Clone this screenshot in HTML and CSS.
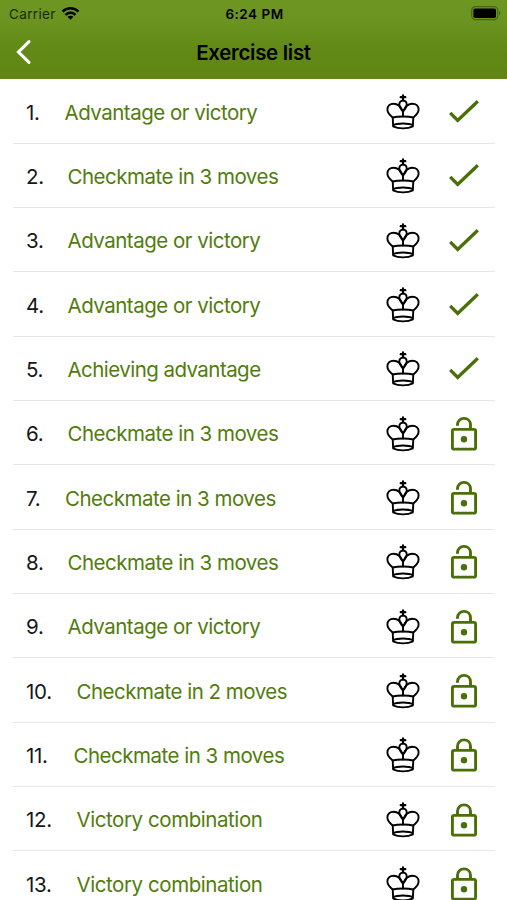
FILE: index.html
```html
<!DOCTYPE html>
<html lang="en">
<head>
<meta charset="utf-8">
<title>Exercise list</title>
<link rel="stylesheet" href="styles.css">
</head>
<body>
<svg class="sprite" aria-hidden="true">
  <symbol id="king" viewBox="0 0 36 38">
    <g fill="none" stroke="currentColor" stroke-width="1.9" stroke-linejoin="round" stroke-linecap="round">
      <path d="M18 2.400V7.500M15.700 4.200h4.600" stroke-width="2.2"/>
      <path d="M18 23.600V18.500C16.300 16.600 14.300 14.200 14.300 11.500C14.300 9.300 15.800 7.600 18 7.600S21.700 9.300 21.700 11.500C21.700 14.200 19.700 16.600 18 18.500"/>
      <path d="M7.700 24.500C4.600 22 2.400 19.800 2.400 16.500C2.400 13 5.100 10.700 8.500 10.700C12.500 10.700 16 13.500 18 18.500C20 13.500 23.500 10.700 27.500 10.700C30.900 10.700 33.600 13 33.600 16.500C33.600 19.800 31.400 22 28.300 24.500"/>
      <path d="M7.700 24.500C13 23.100 23 23.100 28.300 24.500L27.800 33.400C23 36 13 36 8.200 33.400Z"/>
      <path d="M8.400 32.200C12 30 24 30 27.600 32.200"/>
    </g>
  </symbol>
  <symbol id="check" viewBox="0 0 36 38">
    <path d="M3.200 19.800L10.700 27.500L30.800 8.200" fill="none" stroke="currentColor" stroke-width="3.300"/>
  </symbol>
  <symbol id="open" viewBox="0 0 36 38">
    <g fill="none" stroke="currentColor" stroke-width="2.900">
      <rect x="5.400" y="14.400" width="23.200" height="19.700" rx="1.700"/>
      <path d="M10.500 10.700V9.700C10.500 6.100 13.300 3.400 17 3.400S23.500 6.100 23.500 9.700V14.400"/>
    </g>
    <circle cx="17" cy="24.200" r="3.200" fill="currentColor"/>
  </symbol>
  <symbol id="lock" viewBox="0 0 36 38">
    <g fill="none" stroke="currentColor" stroke-width="2.900">
      <rect x="5.400" y="14.400" width="23.200" height="19.700" rx="1.700"/>
      <path d="M10.500 14.400V10.200C10.500 6.600 13.300 3.900 17 3.900S23.500 6.600 23.500 10.200V14.400"/>
    </g>
    <circle cx="17" cy="24.200" r="3.200" fill="currentColor"/>
  </symbol>
</svg>
<header class="header">
  <div class="status">
    <div class="carrier"><span>Carrier</span>
      <svg class="wifi" viewBox="0 0 20 15"><g fill="none" stroke="#000" stroke-width="2.600"><path d="M1.700 5.600C6.300 .9 13.700 .9 18.300 5.600"/><path d="M4.800 8.900C7.700 6.100 12.300 6.100 15.200 8.900"/></g><path d="M6.900 10.900C8.600 9.400 11.400 9.400 13.100 10.900L10 14Z"/></svg>
    </div>
    <div class="clock">6:24 PM</div>
    <svg class="battery" viewBox="0 0 30 15"><rect x=".7" y=".7" width="26" height="13" rx="3.600" fill="none" stroke="#466716" stroke-width="1.200"/><rect x="2.400" y="2.400" width="22.600" height="9.600" rx="1.700"/><path d="M28 5C29.800 5.700 29.800 8.700 28 9.400Z" fill="#466716"/></svg>
  </div>
  <div class="nav">
    <svg class="back" viewBox="0 0 16 26"><path d="M13 2.700L2.500 13L13 23.300" fill="none" stroke="#fff" stroke-width="3.100" stroke-linecap="round"/></svg>
    <h1 class="title">Exercise list</h1>
  </div>
</header>
<main class="list">
  <div class="row"><span class="num thin">1.</span><span class="name">Advantage or victory</span><svg class="icon"><use href="#king"/></svg><svg class="icon state"><use href="#check"/></svg></div>
  <div class="row"><span class="num">2.</span><span class="name">Checkmate in 3 moves</span><svg class="icon"><use href="#king"/></svg><svg class="icon state"><use href="#check"/></svg></div>
  <div class="row"><span class="num">3.</span><span class="name">Advantage or victory</span><svg class="icon"><use href="#king"/></svg><svg class="icon state"><use href="#check"/></svg></div>
  <div class="row"><span class="num">4.</span><span class="name">Advantage or victory</span><svg class="icon"><use href="#king"/></svg><svg class="icon state"><use href="#check"/></svg></div>
  <div class="row"><span class="num">5.</span><span class="name achieving">Achieving advantage</span><svg class="icon"><use href="#king"/></svg><svg class="icon state"><use href="#check"/></svg></div>
  <div class="row"><span class="num">6.</span><span class="name">Checkmate in 3 moves</span><svg class="icon"><use href="#king"/></svg><svg class="icon state"><use href="#open"/></svg></div>
  <div class="row"><span class="num seven">7.</span><span class="name">Checkmate in 3 moves</span><svg class="icon"><use href="#king"/></svg><svg class="icon state"><use href="#open"/></svg></div>
  <div class="row"><span class="num">8.</span><span class="name">Checkmate in 3 moves</span><svg class="icon"><use href="#king"/></svg><svg class="icon state"><use href="#open"/></svg></div>
  <div class="row"><span class="num">9.</span><span class="name">Advantage or victory</span><svg class="icon"><use href="#king"/></svg><svg class="icon state"><use href="#open"/></svg></div>
  <div class="row"><span class="num wide">10.</span><span class="name">Checkmate in 2 moves</span><svg class="icon"><use href="#king"/></svg><svg class="icon state"><use href="#open"/></svg></div>
  <div class="row"><span class="num eleven">11.</span><span class="name">Checkmate in 3 moves</span><svg class="icon"><use href="#king"/></svg><svg class="icon state"><use href="#lock"/></svg></div>
  <div class="row"><span class="num wide">12.</span><span class="name combo">Victory combination</span><svg class="icon"><use href="#king"/></svg><svg class="icon state"><use href="#lock"/></svg></div>
  <div class="row"><span class="num wide">13.</span><span class="name combo">Victory combination</span><svg class="icon"><use href="#king"/></svg><svg class="icon state"><use href="#lock"/></svg></div>
</main>
</body>
</html>
```
FILE: styles.css
```css
* { box-sizing: border-box; }
html { background: #fff; }
body {
  margin: 0;
  height: 900px;
  overflow: hidden;
  font-family: Inter, "Liberation Sans", sans-serif;
  color: #16171a;
}
.sprite { display: none; }
.header {
  height: 79px;
  background: linear-gradient(#6d9623 0%, #6a9320 30%, #638b18 55%, #608514 100%);
  color: #000;
}
.status {
  height: 27px;
  display: grid;
  grid-template-columns: 1fr auto 1fr;
  align-items: center;
  padding: 0 6px 0 9px;
  font-size: 13.5px;
}
.carrier { display: flex; align-items: center; gap: 6px; color: #1b2a06; letter-spacing: .35px; }
.wifi { width: 19px; height: 15px; margin: -1px 0 0 -1px; }
.clock { font-weight: 600; letter-spacing: .5px; margin-right: 1px; }
.battery { width: 30px; height: 15px; justify-self: end; }
.nav {
  height: 50px;
  display: grid;
  grid-template-columns: 1fr auto 1fr;
  align-items: center;
  padding: 0 16px;
}
.back { width: 16px; height: 26px; }
.title { margin: 0; font-size: 20.5px; font-weight: 600; letter-spacing: -.3px; }
.list { padding: .5px 12px 0 13px; }
.row {
  height: 64.33px;
  display: flex;
  align-items: center;
  padding: 2px 12px 0 13px;
  border-bottom: 1px solid #e6e6e6;
  font-size: 20.5px;
}
.num { width: 41.500px; flex: none; letter-spacing: -.3px; }
.thin { width: 38.500px; }
.seven { width: 39px; }
.wide { width: 50.500px; }
.eleven { width: 47.500px; }
.name { flex: 1; white-space: nowrap; color: #527c0c; letter-spacing: -.5px; }
.achieving { letter-spacing: -.55px; }
.combo { letter-spacing: -.43px; }
.icon { width: 36px; height: 38px; flex: none; color: #000; }
.state { color: #496f06; margin-left: 26px; }
```
